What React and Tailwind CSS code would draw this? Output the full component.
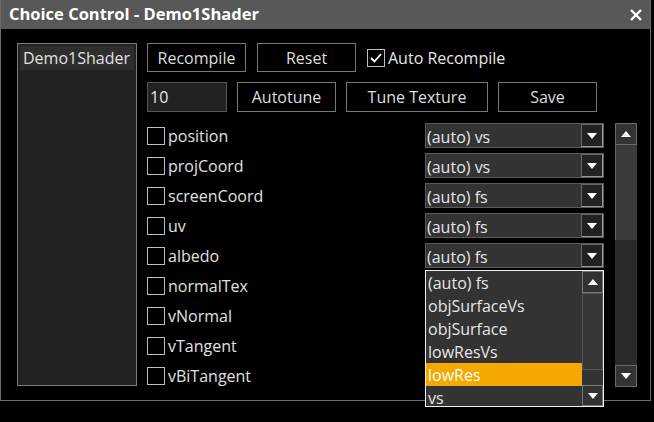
import React from 'react';

const fields = [
  { name: 'position', choice: '(auto) vs' },
  { name: 'projCoord', choice: '(auto) vs' },
  { name: 'screenCoord', choice: '(auto) fs' },
  { name: 'uv', choice: '(auto) fs' },
  { name: 'albedo', choice: '(auto) fs' },
  { name: 'normalTex' },
  { name: 'vNormal' },
  { name: 'vTangent' },
  { name: 'vBiTangent' },
];

const options = ['(auto) fs', 'objSurfaceVs', 'objSurface', 'lowResVs', 'lowRes', 'vs'];

const Tri = ({ up }) => (
  <svg width="10" height="6" viewBox="0 0 10 6">
    <path d={up ? 'M0 6 L5 0 L10 6 Z' : 'M0 0 L10 0 L5 6 Z'} fill="#ffffff" />
  </svg>
);

const Btn = ({ w, children }) => (
  <div className={`${w} h-full border border-[#777] flex items-center justify-center text-[#dedede]`}>
    {children}
  </div>
);

const Box = ({ checked }) => (
  <div className="w-[18px] h-[18px] border border-[#bdbdbd] flex items-center justify-center shrink-0">
    {checked && (
      <svg width="12" height="10" viewBox="0 0 12 10">
        <path d="M1 5 L4.5 8.5 L11 1" stroke="#ffffff" strokeWidth="1.8" fill="none" />
      </svg>
    )}
  </div>
);

const Dropdown = ({ value }) => (
  <div className="w-[179px] h-[25px] flex bg-[#333] border border-[#5a5a5a]">
    <div className="flex-1 overflow-hidden pl-[1px] pt-[3px] text-[#e6e6e6] leading-[20px] whitespace-nowrap">
      {value}
    </div>
    <div className="w-[22px] h-full bg-[#222] border-l border-t border-[#666] border-r-[#999] border-b-[#999] border-r border-b flex items-center justify-center">
      <Tri />
    </div>
  </div>
);

export default function App() {
  return (
    <div
      className="w-[654px] h-[422px] bg-black text-[16px]"
      style={{ fontFamily: '"Open Sans", "Noto Sans", sans-serif' }}
    >
      <div className="w-[651px] h-[401px] flex flex-col border-l border-r border-b border-[#6b6b6b]">
        {/* Title bar */}
        <div className="h-[29px] bg-[#585858] flex items-center justify-between pl-[8px] pr-[8px] shrink-0">
          <span className="text-white font-bold text-[16.5px]">Choice Control - Demo1Shader</span>
          <svg width="12" height="12" viewBox="0 0 12 12">
            <path d="M1 1 L11 11 M11 1 L1 11" stroke="#ffffff" strokeWidth="2.4" />
          </svg>
        </div>

        <div className="flex pl-[16px] pt-[14px] gap-[10px]">
          {/* Shader list */}
          <div className="w-[120px] h-[343px] bg-[#222] border border-[#7a7a7a] p-[2px]">
            <div className="h-[24px] bg-[#2e2e2e] pl-[3px] flex items-center text-[#e0e0e0]">Demo1Shader</div>
          </div>

          <div className="flex flex-col">
            <div className="flex h-[29px] gap-[11px] items-center">
              <Btn w="w-[99px]">Recompile</Btn>
              <Btn w="w-[99px]">Reset</Btn>
              <div className="flex items-center gap-[3px] text-[#e6e6e6]">
                <Box checked />
                <span>Auto Recompile</span>
              </div>
            </div>

            <div className="flex h-[30px] gap-[10px] items-center mt-[10px]">
              <div className="w-[80px] h-full bg-[#222] border border-[#555] flex items-center pl-[2px] text-[#e6e6e6]">10</div>
              <Btn w="w-[99px]">Autotune</Btn>
              <Btn w="w-[142px]">Tune Texture</Btn>
              <Btn w="w-[99px]">Save</Btn>
            </div>

            <div className="flex mt-[11px] gap-[11px] relative">
              <div className="flex flex-col gap-[5px] w-[457px]">
                {fields.map((f) => (
                  <div key={f.name} className="h-[25px] flex items-center">
                    <div className="flex-1 flex items-center gap-[3px] text-[#e0e0e0]">
                      <Box />
                      <span>{f.name}</span>
                    </div>
                    {f.choice && <Dropdown value={f.choice} />}
                  </div>
                ))}
              </div>

              {/* main scrollbar */}
              <div className="w-[22px] h-[264px] flex flex-col bg-[#2a2a2a]">
                <div className="h-[22px] bg-[#333] border border-[#6a6a6a] flex items-center justify-center">
                  <Tri up />
                </div>
                <div className="h-[95px] bg-[#3a3a3a] border-l border-[#666]" />
                <div className="flex-1" />
                <div className="h-[22px] bg-[#333] border border-[#6a6a6a] flex items-center justify-center">
                  <Tri />
                </div>
              </div>

              {/* open dropdown menu */}
              <div className="absolute left-[278px] top-[147px] w-[179px] h-[137px] border border-[#eeeeee] bg-[#333] flex">
                <div className="flex-1 flex flex-col">
                  {options.map((o) => (
                    <div
                      key={o}
                      className={`h-[23px] pl-[2px] flex items-center text-[#e6e6e6] whitespace-nowrap ${o === 'lowRes' ? 'bg-[#f5a800] text-white' : ''}`}
                    >
                      {o}
                    </div>
                  ))}
                </div>
                <div className="w-[21px] flex flex-col bg-[#333]">
                  <div className="h-[22px] border border-[#777] flex items-center justify-center">
                    <Tri up />
                  </div>
                  <div className="h-[77px] border border-[#555] bg-[#363636]" />
                  <div className="flex-1" />
                  <div className="h-[21px] border border-[#777] flex items-center justify-center">
                    <Tri />
                  </div>
                </div>
              </div>
            </div>
          </div>
        </div>
      </div>
    </div>
  );
}
